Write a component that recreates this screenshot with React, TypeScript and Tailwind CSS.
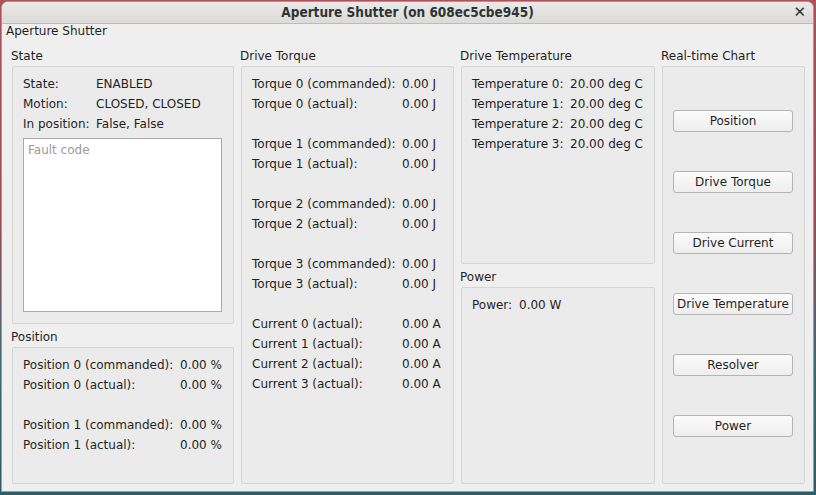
import React from "react";

const font = { fontFamily: '"DejaVu Sans", "Liberation Sans", sans-serif' };

function Group({
  title,
  className = "",
  boxClass = "",
  children,
}: {
  title: string;
  className?: string;
  boxClass?: string;
  children?: React.ReactNode;
}) {
  return (
    <div className={`flex flex-col ${className}`}>
      <div className="h-[18px] leading-[18px] ml-[-1px] mb-[1px] whitespace-nowrap">{title}</div>
      <div
        className={`flex-1 border border-[#d6d6d6] bg-[#ebebeb] rounded-[2px] ${boxClass}`}
      >
        {children}
      </div>
    </div>
  );
}

function Rows({
  rows,
  labelW,
}: {
  rows: ([string, string] | null)[];
  labelW: string;
}) {
  return (
    <div className="flex flex-col">
      {rows.map((r, i) =>
        r ? (
          <div key={i} className="flex h-[20px] leading-[20px] whitespace-nowrap">
            <div className={labelW}>{r[0]}</div>
            <div>{r[1]}</div>
          </div>
        ) : (
          <div key={i} className="h-[20px]" />
        )
      )}
    </div>
  );
}

function Btn({ label }: { label: string }) {
  return (
    <div className="w-[120px] h-[22px] leading-[20px] text-center border border-[#b4b4b4] rounded-[3px] bg-[linear-gradient(to_bottom,#fbfbfb,#eeeeee)] whitespace-nowrap">
      {label}
    </div>
  );
}

export default function App() {
  return (
    <div
      className="w-[816px] h-[495px] overflow-hidden bg-[linear-gradient(to_bottom,#b24f58_0%,#9a4d57_45%,#3a6a72_75%,#2c5c64_100%)] pt-[1px] pl-[1px] text-[12px] text-[#1f1f1f]"
      style={font}
    >
      <div className="w-[813px] h-[491px] rounded-t-[7px] overflow-hidden border border-[#9c9c9c] bg-[#efefef] flex flex-col">
        {/* title bar */}
        <div className="relative h-[22px] shrink-0 bg-[linear-gradient(to_bottom,#eae9e7,#dddbd8)] border-b border-[#bdbbb8] flex items-center justify-center">
          <span
            className="text-[13.5px] font-bold text-[#2e3436] leading-[20px] mt-[-1px]"
            style={{ fontFamily: '"DejaVu Sans Condensed", "DejaVu Sans", sans-serif' }}
          >
            Aperture Shutter (on 608ec5cbe945)
          </span>
          <span className="absolute right-[7px] top-[0px] text-[15px] font-bold text-[#2e3436] leading-[20px]">
            ✕
          </span>
        </div>
        {/* body */}
        <div className="flex-1 flex flex-col">
          <div className="h-[16px] leading-[16px] pl-[4px] mt-[-1px]">Aperture Shutter</div>
          <div className="flex gap-[7px] pl-[10px] mt-[8px] h-[437px]">
            {/* col 1 */}
            <div className="w-[222px] flex flex-col gap-[4px]">
              <Group title="State" className="h-[277px]" boxClass="pt-[7px] pl-[10px] pr-[11px] flex flex-col">
                <Rows
                  labelW="w-[73px]"
                  rows={[
                    ["State:", "ENABLED"],
                    ["Motion:", "CLOSED, CLOSED"],
                    ["In position:", "False, False"],
                  ]}
                />
                <div className="mt-[4px] h-[174px] bg-white border border-[#aaaaaa] pl-[4px] pt-[3px] text-[#9a9a9a] leading-[16px]">
                  Fault code
                </div>
              </Group>
              <Group title="Position" className="flex-1" boxClass="pt-[7px] pl-[10px]">
                <Rows
                  labelW="w-[157px]"
                  rows={[
                    ["Position 0 (commanded):", "0.00 %"],
                    ["Position 0 (actual):", "0.00 %"],
                    null,
                    ["Position 1 (commanded):", "0.00 %"],
                    ["Position 1 (actual):", "0.00 %"],
                  ]}
                />
              </Group>
            </div>
            {/* col 2 */}
            <div className="w-[213px] flex flex-col">
              <Group title="Drive Torque" className="flex-1" boxClass="pt-[7px] pl-[10px]">
                <Rows
                  labelW="w-[150px]"
                  rows={[
                    ["Torque 0 (commanded):", "0.00 J"],
                    ["Torque 0 (actual):", "0.00 J"],
                    null,
                    ["Torque 1 (commanded):", "0.00 J"],
                    ["Torque 1 (actual):", "0.00 J"],
                    null,
                    ["Torque 2 (commanded):", "0.00 J"],
                    ["Torque 2 (actual):", "0.00 J"],
                    null,
                    ["Torque 3 (commanded):", "0.00 J"],
                    ["Torque 3 (actual):", "0.00 J"],
                    null,
                    ["Current 0 (actual):", "0.00 A"],
                    ["Current 1 (actual):", "0.00 A"],
                    ["Current 2 (actual):", "0.00 A"],
                    ["Current 3 (actual):", "0.00 A"],
                  ]}
                />
              </Group>
            </div>
            {/* col 3 */}
            <div className="w-[194px] flex flex-col gap-[4px]">
              <Group title="Drive Temperature" className="h-[217px]" boxClass="pt-[7px] pl-[10px]">
                <Rows
                  labelW="w-[98px]"
                  rows={[
                    ["Temperature 0:", "20.00 deg C"],
                    ["Temperature 1:", "20.00 deg C"],
                    ["Temperature 2:", "20.00 deg C"],
                    ["Temperature 3:", "20.00 deg C"],
                  ]}
                />
              </Group>
              <Group title="Power" className="flex-1" boxClass="pt-[7px] pl-[10px]">
                <Rows labelW="w-[47px]" rows={[["Power:", "0.00 W"]]} />
              </Group>
            </div>
            {/* col 4 */}
            <div className="w-[143px] flex flex-col">
              <Group title="Real-time Chart" className="flex-1" boxClass="pt-[43px] pl-[10px] flex flex-col gap-[39px]">
                <Btn label="Position" />
                <Btn label="Drive Torque" />
                <Btn label="Drive Current" />
                <Btn label="Drive Temperature" />
                <Btn label="Resolver" />
                <Btn label="Power" />
              </Group>
            </div>
          </div>
        </div>
      </div>
    </div>
  );
}
